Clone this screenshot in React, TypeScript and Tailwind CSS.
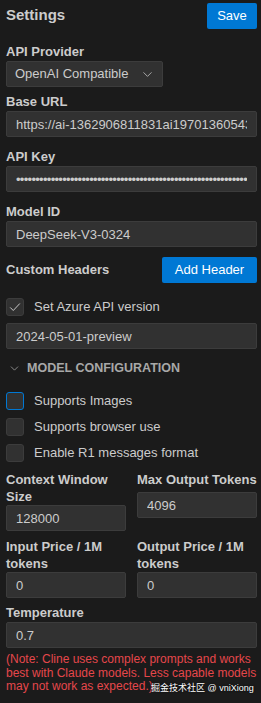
import { ChevronDown } from "lucide-react";

const field =
  "h-[26px] w-full rounded-[2px] border border-[#3c3c3c] bg-[#313131] px-[9px] text-[13px] text-[#cccccc] outline-none";
const label = "block text-[13px] font-bold leading-[18px] text-[#cccccc]";

function Check({ checked, focused }: { checked?: boolean; focused?: boolean }) {
  return (
    <span
      className={
        "flex h-[18px] w-[18px] shrink-0 items-center justify-center rounded-[3px] border bg-[#313131] " +
        (focused ? "border-[#0078d4]" : "border-[#3c3c3c]")
      }
    >
      {checked && (
        <svg width="14" height="14" viewBox="0 0 16 16" fill="none">
          <path d="M2.5 8.5l3.5 3.5 7.5-8" stroke="#cccccc" strokeWidth="1.1" />
        </svg>
      )}
    </span>
  );
}

function CheckRow({ text, checked, focused }: { text: string; checked?: boolean; focused?: boolean }) {
  return (
    <div className="flex h-[18px] items-center gap-[10px] text-[13px] text-[#cccccc]">
      <Check checked={checked} focused={focused} />
      <span>{text}</span>
    </div>
  );
}

export default function App() {
  const bullets = "•".repeat(90);
  return (
    <div
      className="relative h-[703px] w-[261px] overflow-hidden bg-[#1b1b1b] pl-[6px] pr-[4px]"
      style={{ fontFamily: '"Liberation Sans", "Noto Sans CJK SC", sans-serif' }}
    >
      <div className="flex h-[30px] items-center justify-between pt-[1px]">
        <h1 className="text-[15px] font-bold text-[#cccccc]">Settings</h1>
        <button className="h-[26px] w-[50px] rounded-[2px] bg-[#0078d4] text-[13px] text-white">Save</button>
      </div>

      <div className="mt-[13px]">
        <span className={label}>API Provider</span>
        <div className="flex h-[26px] w-[157px] items-center justify-between rounded-[2px] border border-[#3c3c3c] bg-[#313131] pl-[8px] pr-[7px] text-[13px] text-[#cccccc]">
          <span>OpenAI Compatible</span>
          <ChevronDown size={15} strokeWidth={1.2} color="#cccccc" />
        </div>
      </div>

      <div className="mt-[6px]">
        <span className={label}>Base URL</span>
        <input className={field} readOnly value="https://ai-1362906811831ai1970136054318.openai.azure.com" />
      </div>

      <div className="mt-[11px]">
        <span className={label}>API Key</span>
        <input className={field + " tracking-[-0.7px]"} readOnly value={bullets} />
      </div>

      <div className="mt-[11px]">
        <span className={label}>Model ID</span>
        <input className={field} readOnly value="DeepSeek-V3-0324" />
      </div>

      <div className="mt-[10px] flex h-[26px] items-center justify-between">
        <span className="text-[13px] font-bold text-[#cccccc]">Custom Headers</span>
        <button className="h-[26px] w-[95px] rounded-[2px] bg-[#0078d4] text-[13px] text-white">Add Header</button>
      </div>

      <div className="mt-[15px]">
        <CheckRow text="Set Azure API version" checked />
      </div>
      <input className={field + " mt-[7px]"} readOnly value="2024-05-01-preview" />

      <div className="mt-[10px] flex h-[18px] items-center gap-[6px] text-[12.5px] font-bold text-[#a8a8a8]">
        <ChevronDown size={13} strokeWidth={1.4} className="ml-[2px]" />
        <span>MODEL CONFIGURATION</span>
      </div>

      <div className="mt-[15px] flex flex-col gap-[8px]">
        <CheckRow text="Supports Images" focused />
        <CheckRow text="Supports browser use" />
        <CheckRow text="Enable R1 messages format" />
      </div>

      <div className="mt-[9px] grid grid-cols-2 gap-x-[11px] gap-y-[7px]">
        <div>
          <span className="block text-[13px] font-bold leading-[17px] text-[#cccccc]">Context Window Size</span>
          <input className={field} readOnly value="128000" />
        </div>
        <div>
          <span className="mb-[4px] block text-[13px] font-bold leading-[17px] text-[#cccccc]">Max Output Tokens</span>
          <input className={field} readOnly value="4096" />
        </div>
        <div>
          <span className="block text-[13px] font-bold leading-[17px] text-[#cccccc]">Input Price / 1M tokens</span>
          <input className={field} readOnly value="0" />
        </div>
        <div>
          <span className="block text-[13px] font-bold leading-[17px] text-[#cccccc]">Output Price / 1M tokens</span>
          <input className={field} readOnly value="0" />
        </div>
      </div>

      <div className="mt-[6px]">
        <span className={label}>Temperature</span>
        <input className={field + " w-[166px]"} readOnly value="0.7" />
      </div>

      <p className="mt-[5px] text-[12px] leading-[13.5px] text-[#e5474b]">
        (Note: Cline uses complex prompts and works best with Claude models. Less capable models may not work as expected.)
      </p>

      <div className="absolute left-[151px] top-[682px] whitespace-nowrap text-[9px] text-white [text-shadow:0_0_2px_#000]">
        掘金技术社区 @ vniXiong
      </div>
    </div>
  );
}
